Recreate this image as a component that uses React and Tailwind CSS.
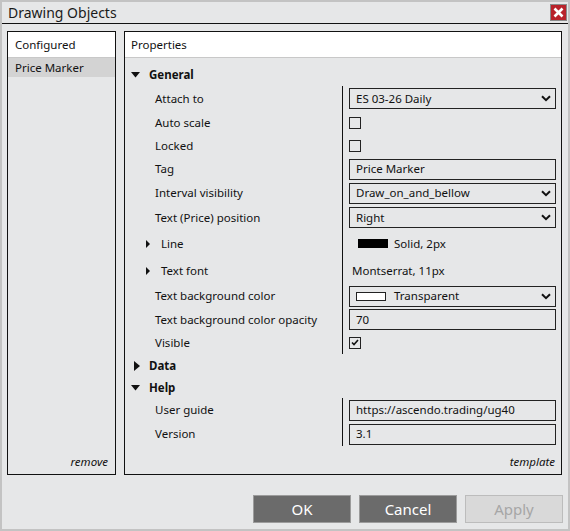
import React from 'react';

const font = { fontFamily: '"Noto Sans", "Open Sans", sans-serif' };

const Chevron = () => (
  <svg width="10" height="7" viewBox="0 0 10 7" className="shrink-0">
    <path d="M1 1.2 L5 5.2 L9 1.2" fill="none" stroke="#111" strokeWidth="2" />
  </svg>
);

const TriDown = () => (
  <svg width="9" height="6" viewBox="0 0 9 6"><path d="M0 0 H9 L4.5 5.5 Z" fill="#111" /></svg>
);
const TriRight = ({ small }) =>
  small ? (
    <svg width="4" height="8" viewBox="0 0 4 8"><path d="M0 0 L4 4 L0 8 Z" fill="#111" /></svg>
  ) : (
    <svg width="6" height="10" viewBox="0 0 6 10"><path d="M0 0 L6 5 L0 10 Z" fill="#111" /></svg>
  );

const Section = ({ label, open, h = 'h-[23px]' }) => (
  <div className={`flex items-center ${h}`}>
    <div className="w-[24px] flex justify-end pr-[9px]">{open ? <TriDown /> : <TriRight />}</div>
    <span className="text-[11.5px] font-bold">{label}</span>
  </div>
);

const Row = ({ label, h = 'h-[23px]', sub, children }) => (
  <div className={`flex ${h}`}>
    <div className="w-[217px] flex items-center">
      {sub ? (
        <>
          <div className="w-[25px] flex justify-end"><TriRight small /></div>
          <span className="pl-[11px] text-[11.5px]">{label}</span>
        </>
      ) : (
        <span className="pl-[30px] text-[11.5px]">{label}</span>
      )}
    </div>
    <div className="flex-1 border-l border-[#111] flex items-center pl-[6px] pr-[5px]">{children}</div>
  </div>
);

const Box = ({ children, select }) => (
  <div className="w-full h-[21px] border border-[#222] flex items-center pl-[6px] pr-[4px] text-[11.5px]">
    <div className="flex-1 flex items-center">{children}</div>
    {select && <Chevron />}
  </div>
);

const Check = ({ on }) => (
  <div className="w-[12px] h-[12px] border border-[#222] flex items-center justify-center">
    {on && (
      <svg width="8" height="7" viewBox="0 0 8 7"><path d="M1 3.5 L3 5.5 L7 1" fill="none" stroke="#111" strokeWidth="1.6" /></svg>
    )}
  </div>
);

export default function App() {
  return (
    <div style={font} className="w-[570px] h-[531px] bg-[#e6e7e8] border-2 border-[#c3c3c3] flex flex-col text-[#111]">
      <div className="h-[21px] flex items-center justify-between pl-[6px] pr-[1px] border-b border-[#111] box-content">
        <span className="text-[14px] text-[#1a1a1a]">Drawing Objects</span>
        <div className="w-[17px] h-[17px] bg-[#b8232b] border border-[#8a8a8a] flex items-center justify-center">
          <svg width="11" height="11" viewBox="0 0 11 11"><path d="M1.5 1.5 L9.5 9.5 M9.5 1.5 L1.5 9.5" stroke="#fff" strokeWidth="2.6" /></svg>
        </div>
      </div>

      <div className="flex gap-[8px] pl-[5px] pr-[6px] pt-[7px] h-[451px]">
        <div className="w-[109px] border border-[#111] flex flex-col">
          <div className="h-[26px] bg-white border-b border-[#c8c8c8] flex items-center pl-[7px] text-[11.5px]">Configured</div>
          <div className="h-[19px] bg-[#d3d3d3] flex items-center pl-[7px] text-[11.5px]">Price Marker</div>
          <div className="flex-1" />
          <div className="text-right italic text-[11.5px] pr-[7px] pb-[4px]">remove</div>
        </div>

        <div className="flex-1 border border-[#111] flex flex-col">
          <div className="h-[26px] bg-white border-b border-[#c8c8c8] flex items-center pl-[6px] text-[11.5px]">Properties</div>
          <div className="pt-[6px] flex flex-col">
            <Section label="General" open h="h-[22px]" />
            <Row label="Attach to" h="h-[25px]"><Box select>ES 03-26 Daily</Box></Row>
            <Row label="Auto scale"><Check /></Row>
            <Row label="Locked"><Check /></Row>
            <Row label="Tag" h="h-[24px]"><Box>Price Marker</Box></Row>
            <Row label="Interval visibility" h="h-[24px]"><Box select>Draw_on_and_bellow</Box></Row>
            <Row label="Text (Price) position" h="h-[25px]"><Box select>Right</Box></Row>
            <Row label="Line" sub h="h-[27px]">
              <div className="w-[30px] h-[9px] bg-black ml-[9px]" />
              <span className="ml-[6px] text-[11.5px]">Solid, 2px</span>
            </Row>
            <Row label="Text font" sub h="h-[27px]">
              <span className="ml-[3px] text-[11.5px]">Montserrat, 11px</span>
            </Row>
            <Row label="Text background color" h="h-[24px]">
              <Box select>
                <div className="w-[30px] h-[9px] bg-white border border-[#222]" />
                <span className="ml-[8px]">Transparent</span>
              </Box>
            </Row>
            <Row label="Text background color opacity"><Box>70</Box></Row>
            <Row label="Visible"><Check on /></Row>
            <Section label="Data" />
            <Section label="Help" open h="h-[21px]" />
            <Row label="User guide" h="h-[24px]"><Box>https://ascendo.trading/ug40</Box></Row>
            <Row label="Version" h="h-[24px]"><Box>3.1</Box></Row>
          </div>
          <div className="flex-1" />
          <div className="text-right italic text-[11.5px] pr-[6px] pb-[4px]">template</div>
        </div>
      </div>

      <div className="flex-1 flex justify-end items-start gap-[8px] pr-[5px] pt-[20px]">
        <div className="w-[98px] h-[28px] bg-[#6b6b6b] border border-[#9c9c9c] text-white text-[15px] flex items-center justify-center">OK</div>
        <div className="w-[98px] h-[28px] bg-[#6b6b6b] border border-[#9c9c9c] text-white text-[15px] flex items-center justify-center">Cancel</div>
        <div className="w-[98px] h-[28px] bg-[#d9d9d9] border border-[#bcbcbc] text-[#a6a6a6] text-[15px] flex items-center justify-center">Apply</div>
      </div>
    </div>
  );
}
